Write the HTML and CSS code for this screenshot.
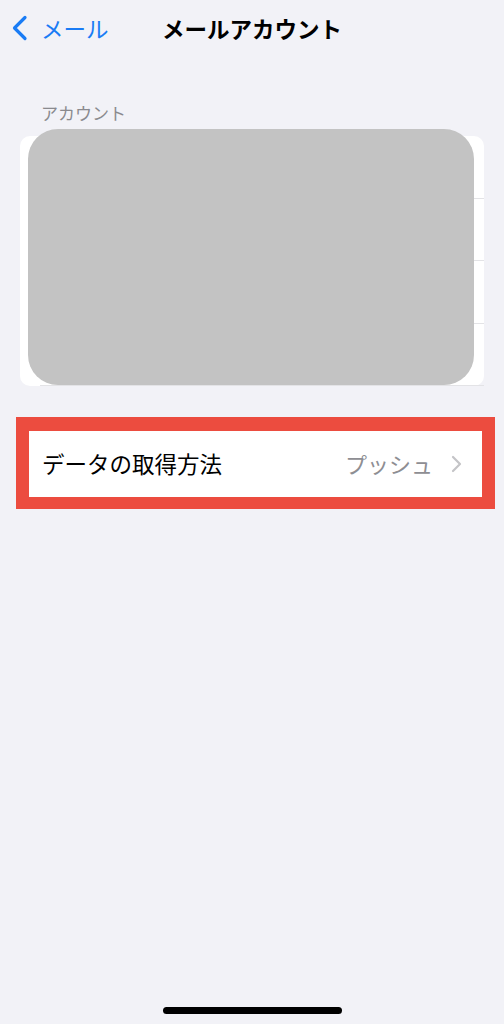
FILE: index.html
```html
<!DOCTYPE html>
<html lang="ja">
<head>
<meta charset="utf-8">
<link rel="stylesheet" href="styles.css">
</head>
<body>
<div class="page">
  <header class="nav">
    <div class="back">
      <svg class="chev" width="17" height="26" viewBox="0 0 17 26"><path d="M14 2.5 L3.5 13 L14 23.5" fill="none" stroke="#1a7cf5" stroke-width="3.2" stroke-linecap="round" stroke-linejoin="round"/></svg>
      <span class="back-text">メール</span>
    </div>
    <div class="title">メールアカウント</div>
  </header>

  <div class="section-header">アカウント</div>
  <div class="card">
    <div class="row"></div>
    <div class="row"></div>
    <div class="row"></div>
    <div class="row"></div>
    <div class="redact"></div>
  </div>

  <div class="highlight">
    <div class="fetch-row">
      <span class="label">データの取得方法</span>
      <span class="value">プッシュ</span>
      <svg class="disc" width="11" height="18" viewBox="0 0 11 18"><path d="M2 2 L9 9 L2 16" fill="none" stroke="#c4c4c7" stroke-width="2.2" stroke-linecap="round" stroke-linejoin="round"/></svg>
    </div>
  </div>

  <div class="home-indicator"></div>
</div>
</body>
</html>
```
FILE: styles.css
```css
html, body {
  margin: 0;
  padding: 0;
  background: #f2f2f7;
}
body {
  font-family: "Noto Sans CJK JP", "Noto Sans", sans-serif;
}
.page {
  height: 1024px;
  display: flex;
  flex-direction: column;
  overflow: hidden;
}
.nav {
  position: relative;
  height: 56px;
  display: flex;
  align-items: center;
}
.back {
  display: flex;
  align-items: center;
  padding-left: 11px;
  gap: 13px;
  color: #1a7cf5;
}
.chev { display: block; }
.back-text {
  font-size: 22.5px;
  line-height: 28px;
}
.title {
  position: absolute;
  left: 0;
  right: 0;
  top: 0;
  height: 56px;
  line-height: 56px;
  text-align: center;
  font-size: 22.5px;
  font-weight: 700;
  color: #000;
  pointer-events: none;
}
.section-header {
  margin-top: 45px;
  padding-left: 41px;
  font-size: 17px;
  line-height: 24px;
  color: #8a8a8e;
}
.card {
  position: relative;
  margin: 11px 20px 0 20px;
  background: #fff;
  border-radius: 10px;
  height: 250px;
  display: flex;
  flex-direction: column;
}
.row {
  height: 62px;
  margin-left: 20px;
  border-bottom: 1px solid #e3e3e6;
}
.row:last-of-type { border-bottom: none; flex: 1; }
.redact {
  position: absolute;
  left: 8px;
  right: 10px;
  top: -7px;
  bottom: 1px;
  background: #c3c3c3;
  border-radius: 30px;
}
.highlight {
  margin: 31px 0 0 16px;
  width: 453px;
  border: 13px solid #ec4c3f;
  border-top-width: 14px;
  border-bottom-width: 12px;
  background: #fff;
}
.fetch-row {
  height: 66px;
  display: flex;
  align-items: center;
  padding: 0 20px 0 13px;
}
.label {
  flex: 1;
  font-size: 22.5px;
  line-height: 30px;
  margin-top: -3px;
  color: #000;
}
.value {
  font-size: 22px;
  line-height: 30px;
  margin-top: -3px;
  color: #8e8e93;
  margin-right: 18px;
}
.disc { display: block; }
.home-indicator {
  margin: auto auto 10px auto;
  width: 179px;
  height: 7px;
  border-radius: 4px;
  background: #000;
}
```
